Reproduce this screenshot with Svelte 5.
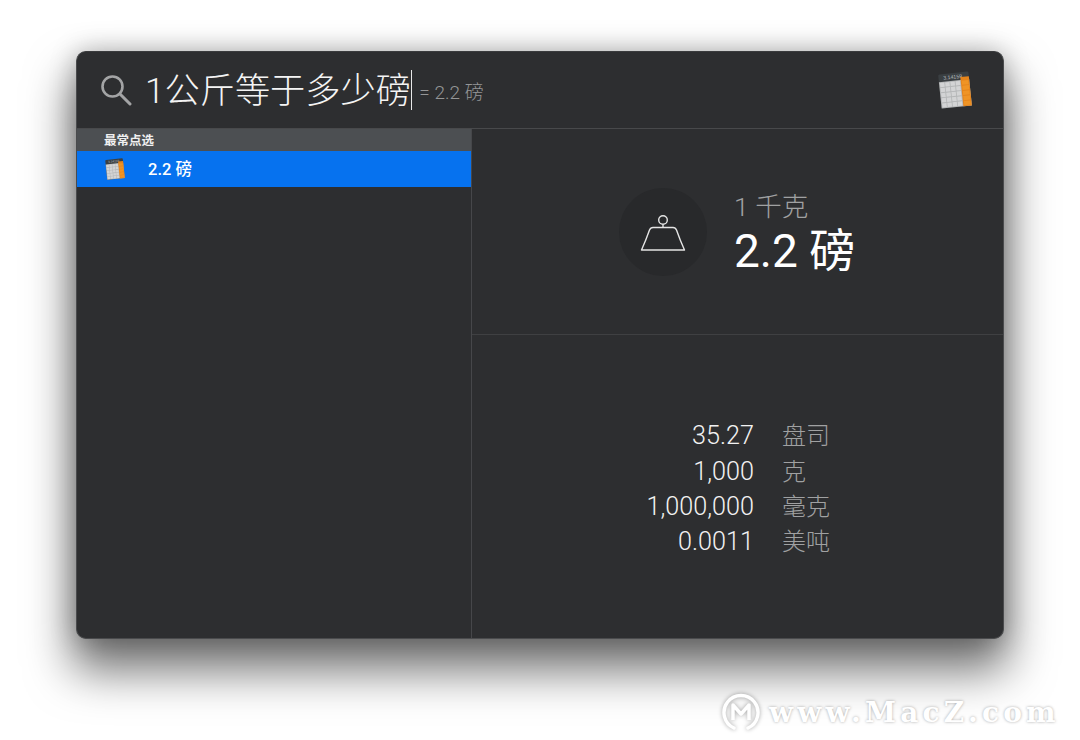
<script>
  const conversions = [
    { value: '35.27', unit: '盘司' },
    { value: '1,000', unit: '克' },
    { value: '1,000,000', unit: '毫克' },
    { value: '0.0011', unit: '美吨' }
  ];
  const rows = [0, 1, 2, 3, 4];
</script>

{#snippet calc(cls)}
  <svg class={cls} viewBox="0 0 40 40" aria-hidden="true">
    <g transform="rotate(-6 20 20)">
      <rect x="4" y="2" width="32" height="36" rx="1.5" fill="#3a3f42" />
      <text x="19" y="8" font-size="5.5" fill="#b9bcbe" text-anchor="middle" font-family="Liberation Sans, sans-serif">3.14159</text>
      <rect x="4" y="10" width="32" height="28" fill="#b4b6b7" />
      <rect x="27" y="7" width="9" height="31" fill="#e5841b" />
      {#each rows as r}
        {#each [0, 1, 2, 3] as c}
          <rect x={5 + c * 5.5} y={11 + r * 5.4} width="4.6" height="4.4" fill="#d3d4d5" />
        {/each}
        <rect x="28" y={11 + r * 5.4} width="7" height="4.4" fill="#ef9425" />
      {/each}
    </g>
  </svg>
{/snippet}

<div class="page">
  <div class="window">
    <header class="search">
      <svg class="lens" viewBox="0 0 32 32" aria-hidden="true">
        <circle cx="12.5" cy="12.5" r="10" fill="none" stroke="#a3a4a5" stroke-width="2.6" />
        <path d="M20 20 L30 30" stroke="#a3a4a5" stroke-width="3" stroke-linecap="round" />
      </svg>
      <span class="query">1公斤等于多少磅</span>
      <span class="caret"></span>
      <span class="hint">= 2.2 磅</span>
      {@render calc('calc-big')}
    </header>

    <div class="body">
      <aside class="results">
        <div class="section">最常点选</div>
        <div class="row">
          {@render calc('calc-small')}
          <span>2.2 磅</span>
        </div>
      </aside>

      <main class="detail">
        <section class="summary">
          <div class="badge">
            <svg viewBox="0 0 88 88" aria-hidden="true">
              <circle cx="44" cy="32" r="4.3" fill="none" stroke="#e4e4e4" stroke-width="1.4" />
              <path d="M44 36.5 V39.5 M34 39.5 H54 Q56.5 39.5 57.5 42 Q61 52 65.5 62 H22.5 Q27 52 30.5 42 Q31.5 39.5 34 39.5 Z" fill="none" stroke="#e4e4e4" stroke-width="1.4" stroke-linejoin="round" />
            </svg>
          </div>
          <div class="amounts">
            <div class="from">1 千克</div>
            <div class="to">2.2 磅</div>
          </div>
        </section>
        <section class="table">
          <div class="grid">
            {#each conversions as item}
              <span class="value">{item.value}</span>
              <span class="unit">{item.unit}</span>
            {/each}
          </div>
        </section>
      </main>
    </div>
  </div>

  <div class="mark">
    <svg viewBox="0 0 40 40" aria-hidden="true">
      <path d="M13 36 A17 17 0 1 1 27 36" fill="none" stroke="#fff" stroke-width="3.4" stroke-linecap="round" />
      <path d="M12 28 V13 L20 22 L28 13 V28" fill="none" stroke="#fff" stroke-width="3.4" stroke-linejoin="round" />
    </svg>
    <span>www.MacZ.com</span>
  </div>
</div>

<style>
  :global(body) {
    margin: 0;
    background: #fff;
  }

  .page {
    position: relative;
    width: 1080px;
    height: 740px;
    padding: 51px 0 0 76px;
    box-sizing: border-box;
    overflow: hidden;
    font-family: Roboto, "Noto Sans CJK SC", sans-serif;
    color: #fff;
  }

  .window {
    width: 928px;
    height: 588px;
    box-sizing: border-box;
    display: flex;
    flex-direction: column;
    background: #2d2e30;
    border: 1px solid #4a4b4d;
    border-top-color: #3a3b3d;
    border-radius: 10px;
    overflow: hidden;
    box-shadow: 0 28px 46px 4px rgba(0, 0, 0, 0.55), 0 0 26px rgba(0, 0, 0, 0.25);
  }

  .search {
    flex: none;
    height: 76px;
    display: flex;
    align-items: center;
    padding-left: 23px;
    border-bottom: 1px solid #48494b;
  }

  .lens {
    width: 32px;
    height: 32px;
    flex: none;
    margin-right: 13px;
  }

  .query {
    font-size: 35.2px;
    font-weight: 300;
    color: #f4f4f4;
    line-height: 40px;
    padding-top: 1px;
  }

  .caret {
    width: 1.5px;
    height: 40px;
    background: #e8e8e8;
  }

  .hint {
    margin-left: 7px;
    font-size: 19px;
    font-weight: 300;
    color: #959697;
    padding-top: 1px;
  }

  .calc-big {
    width: 38px;
    height: 38px;
    margin-left: auto;
    margin-right: 29px;
  }

  .body {
    flex: 1;
    min-height: 0;
    display: grid;
    grid-template-columns: 395px 1fr;
  }

  .results {
    border-right: 1px solid #46474a;
  }

  .section {
    height: 22px;
    box-sizing: border-box;
    padding: 4px 0 0 27px;
    background: #4c4f52;
    font-size: 12.5px;
    font-weight: 700;
    line-height: 16px;
    color: #f0f0f0;
  }

  .row {
    height: 36px;
    display: flex;
    align-items: center;
    padding-left: 27px;
    background: #0672ef;
    font-size: 16.5px;
    font-weight: 500;
  }

  .row span {
    padding-bottom: 2px;
  }

  .calc-small {
    width: 22px;
    height: 22px;
    margin-right: 22px;
  }

  .detail {
    display: flex;
    flex-direction: column;
  }

  .summary {
    flex: none;
    height: 206px;
    box-sizing: border-box;
    display: flex;
    align-items: center;
    padding: 1px 0 0 147px;
    border-bottom: 1px solid #3f4042;
  }

  .badge {
    width: 88px;
    height: 88px;
    flex: none;
    border-radius: 50%;
    background: #28292b;
    margin-right: 27px;
  }

  .badge svg {
    display: block;
    width: 88px;
    height: 88px;
  }

  .amounts {
    padding-top: 5px;
  }

  .from {
    font-size: 26.5px;
    line-height: 30px;
    color: #a0a1a2;
    font-weight: 300;
  }

  .to {
    font-size: 46px;
    line-height: 54px;
    margin-top: 2px;
    color: #fff;
  }

  .table {
    flex: 1;
    padding: 82px 0 0 174px;
  }

  .grid {
    display: grid;
    grid-template-columns: 108px auto;
    column-gap: 28px;
    grid-auto-rows: 35.4px;
    justify-content: start;
    align-items: center;
    font-size: 24px;
  }

  .value {
    text-align: right;
    font-size: 25.2px;
    color: #f2f2f2;
    font-weight: 300;
    white-space: nowrap;
    padding-top: 2px;
  }

  .unit {
    color: #a0a1a2;
    font-weight: 300;
    padding-bottom: 2px;
  }

  .mark {
    position: absolute;
    left: 721px;
    top: 692px;
    display: flex;
    align-items: center;
    gap: 8px;
  }

  .mark svg {
    width: 40px;
    height: 40px;
    filter: drop-shadow(0 0 2px rgba(0, 0, 0, 0.35));
  }

  .mark span {
    font-family: "DejaVu Serif", serif;
    font-weight: 700;
    font-size: 28px;
    letter-spacing: 4.2px;
    color: #fff;
    white-space: nowrap;
    text-shadow: 0 0 3px rgba(0, 0, 0, 0.35);
  }
</style>
